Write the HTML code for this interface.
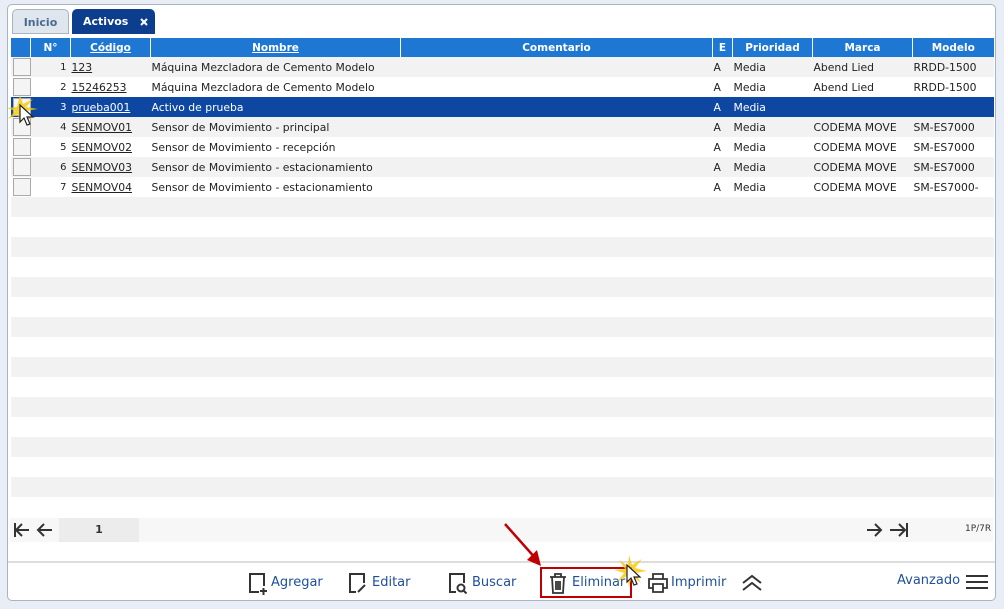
<!DOCTYPE html>
<html><head><meta charset="utf-8"><style>
*{box-sizing:border-box;margin:0;padding:0}
body{width:1004px;height:609px;background:#e9eef6;font-family:"DejaVu Sans","Liberation Sans",sans-serif;position:relative;overflow:hidden}
.panel{position:absolute;left:7px;top:4px;width:989px;height:597px;background:#fff;border:1px solid #a9b3c2;border-radius:5px}
.tabs{position:absolute;left:10px;top:9px}
.tab{position:absolute;top:0;height:25px;border-radius:5px 5px 0 0;font-size:11px;font-weight:bold;line-height:25px;white-space:nowrap}
.t1{left:2px;width:57px;background:#dfe6ee;border:1px solid #aab4c0;color:#4a6a92;text-align:center}
.t2{left:62px;width:83px;background:#0d3e8e;color:#fff;padding-left:11px}
table{position:absolute;left:10px;top:38px;border-collapse:collapse;font-size:10.8px;table-layout:fixed}
th{background:#1e77d3;color:#fff;height:19px;font-size:10.5px;border-left:1px solid #fff;font-weight:bold}
th u{text-decoration:underline}
td{height:20px;white-space:nowrap;overflow:hidden;color:#222;padding-left:1px}
tr.o td{background:#f2f2f2}
tr.e td{background:#fff}
tr.s td{background:#0d47a1;color:#fff}
td.n{text-align:right;padding-right:4px;font-size:10px}
td.cb div{width:18px;height:18px;border:1px solid #aaa;background:#f4f4f4;margin-left:1px}
td u{text-decoration:underline}
.pag{position:absolute;left:10px;top:518px;width:983px;height:24px;background:#f7f7f7}
.pg1{position:absolute;left:49px;top:0;width:80px;height:24px;background:#ececec;text-align:center;line-height:24px;font-size:11px;font-weight:bold;color:#333}
.sep{position:absolute;left:8px;top:561px;width:987px;height:2px;background:#ddd}
.btn{position:absolute;top:575px;font-size:13px;color:#1f4f9a;font-family:"DejaVu Sans",sans-serif}
</style></head><body>
<div class="panel"></div>
<div class="tabs"><div class="tab t1">Inicio</div><div class="tab t2">Activos<svg style="position:absolute;left:68px;top:9px" width="8" height="8" stroke="#fff" stroke-width="2"><path d="M1 1l6 6M7 1l-6 6"/></svg></div></div>
<table>
<colgroup><col width="20"><col width="40"><col width="80"><col width="250"><col width="312"><col width="20"><col width="80"><col width="100"><col width="81"></colgroup>
<tr><th></th><th>N°</th><th><u>Código</u></th><th><u>Nombre</u></th><th>Comentario</th><th>E</th><th>Prioridad</th><th>Marca</th><th>Modelo</th></tr>
<tr class="o"><td class="cb"><div></div></td><td class="n">1</td><td><u>123</u></td><td>Máquina Mezcladora de Cemento Modelo</td><td></td><td>A</td><td>Media</td><td>Abend Lied</td><td>RRDD-1500</td></tr>
<tr class="e"><td class="cb"><div></div></td><td class="n">2</td><td><u>15246253</u></td><td>Máquina Mezcladora de Cemento Modelo</td><td></td><td>A</td><td>Media</td><td>Abend Lied</td><td>RRDD-1500</td></tr>
<tr class="s"><td class="cb"><div></div></td><td class="n">3</td><td><u>prueba001</u></td><td>Activo de prueba</td><td></td><td>A</td><td>Media</td><td></td><td></td></tr>
<tr class="o"><td class="cb"><div></div></td><td class="n">4</td><td><u>SENMOV01</u></td><td>Sensor de Movimiento - principal</td><td></td><td>A</td><td>Media</td><td>CODEMA MOVE</td><td>SM-ES7000</td></tr>
<tr class="e"><td class="cb"><div></div></td><td class="n">5</td><td><u>SENMOV02</u></td><td>Sensor de Movimiento - recepción</td><td></td><td>A</td><td>Media</td><td>CODEMA MOVE</td><td>SM-ES7000</td></tr>
<tr class="o"><td class="cb"><div></div></td><td class="n">6</td><td><u>SENMOV03</u></td><td>Sensor de Movimiento - estacionamiento</td><td></td><td>A</td><td>Media</td><td>CODEMA MOVE</td><td>SM-ES7000</td></tr>
<tr class="e"><td class="cb"><div></div></td><td class="n">7</td><td><u>SENMOV04</u></td><td>Sensor de Movimiento - estacionamiento</td><td></td><td>A</td><td>Media</td><td>CODEMA MOVE</td><td>SM-ES7000-</td></tr>
<tr class="o"><td colspan="9"></td></tr><tr class="e"><td colspan="9"></td></tr>
<tr class="o"><td colspan="9"></td></tr><tr class="e"><td colspan="9"></td></tr>
<tr class="o"><td colspan="9"></td></tr><tr class="e"><td colspan="9"></td></tr>
<tr class="o"><td colspan="9"></td></tr><tr class="e"><td colspan="9"></td></tr>
<tr class="o"><td colspan="9"></td></tr><tr class="e"><td colspan="9"></td></tr>
<tr class="o"><td colspan="9"></td></tr><tr class="e"><td colspan="9"></td></tr>
<tr class="o"><td colspan="9"></td></tr><tr class="e"><td colspan="9"></td></tr>
<tr class="o"><td colspan="9"></td></tr><tr class="e"><td colspan="9"></td></tr>
</table>
<div class="pag"><div class="pg1">1</div>
<svg style="position:absolute;left:2px;top:3px" width="44" height="18" viewBox="0 0 44 18" fill="none" stroke="#333" stroke-width="2"><path d="M3 2v14M4 9h13M10 3l-6 6 6 6M26 9h14M32 3l-6 6 6 6"/></svg>
<svg style="position:absolute;left:855px;top:3px" width="46" height="18" viewBox="0 0 46 18" fill="none" stroke="#333" stroke-width="2"><path d="M2 9h14M10 3l6 6-6 6M25 9h15M34 3l6 6-6 6M42 2v14"/></svg>
<span style="position:absolute;left:955px;top:6px;font-size:9px;color:#333">1P/7R</span></div>
<div class="sep"></div>
<svg style="position:absolute;left:248px;top:572px" width="20" height="24" fill="none" stroke="#333" stroke-width="2"><path d="M11 20H2V2h14v12M12 19h7M15.5 16v7"/></svg>
<div class="btn" style="left:271px">Agregar</div>
<svg style="position:absolute;left:348px;top:572px" width="20" height="24" fill="none" stroke="#333" stroke-width="2"><path d="M8 20H2V2h14v9M10 20l7-7"/></svg>
<div class="btn" style="left:372px">Editar</div>
<svg style="position:absolute;left:448px;top:572px" width="22" height="24" fill="none" stroke="#333" stroke-width="2"><path d="M8 20H2V2h14v9"/><circle cx="13" cy="16" r="3.5"/><path d="M15.5 18.5l3 3"/></svg>
<div class="btn" style="left:472px">Buscar</div>
<div style="position:absolute;left:540px;top:567px;width:92px;height:31px;border:2px solid #c00000"></div>
<svg style="position:absolute;left:549px;top:573px" width="18" height="22" fill="none" stroke="#333" stroke-width="1.8"><path d="M1 4h16M6 4V1h6v3M3 4l1 16h10l1-16M7 8v9M9 8v9M11 8v9"/></svg>
<div class="btn" style="left:572px">Eliminar</div>
<svg style="position:absolute;left:497px;top:520px" width="50" height="50"><path d="M8 4L40 40" stroke="#c00000" stroke-width="2.5"/><path d="M44 46L30 40L40 30Z" fill="#c00000"/></svg>
<svg style="position:absolute;left:615px;top:553px" width="36" height="36"><path d="M14 2l3 10 10-6-7 9 12 3-12 2 6 10-9-7-3 11-2-11-10 6 7-9-10-3 11-1-6-9 9 6z" fill="#f6c800" opacity=".8"/><path d="M12 12v17l4-4 3 7 3-1-3-7h6z" fill="#fff" stroke="#222" stroke-width="1.2"/></svg>
<svg style="position:absolute;left:648px;top:573px" width="20" height="20" fill="none" stroke="#333" stroke-width="1.8"><path d="M5 6V1h10v5M5 15H1V6h18v9h-4M5 11h10v8H5z"/></svg>
<div class="btn" style="left:671px">Imprimir</div>
<svg style="position:absolute;left:741px;top:574px" width="22" height="18" fill="none" stroke="#333" stroke-width="2"><path d="M2 9l9-7 9 7M2 16l9-7 9 7"/></svg>
<div class="btn" style="left:897px;top:573px">Avanzado</div>
<svg style="position:absolute;left:966px;top:574px" width="22" height="16" stroke="#333" stroke-width="2"><path d="M0 2h22M0 8h22M0 14h22"/></svg>
<svg style="position:absolute;left:8px;top:95px" width="36" height="40"><path d="M12 0l3 9 10-5-7 8 12 2-12 2 6 9-9-6-3 10-2-10-10 5 7-8-8-3 10-1z" fill="#f6c800" opacity=".8"/><path d="M12 10v17l4-4 3 7 3-1-3-7h6z" fill="#fff" stroke="#222" stroke-width="1.2"/></svg>
</body></html>
